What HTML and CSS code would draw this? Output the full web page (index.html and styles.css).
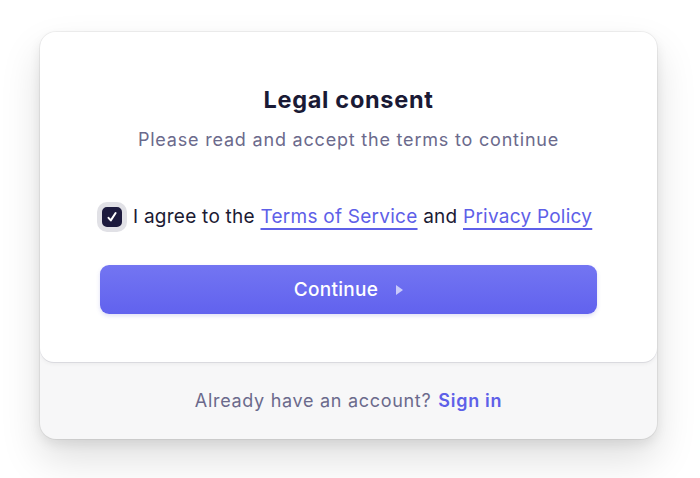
FILE: index.html
```html
<!DOCTYPE html>
<html>
<head>
<meta charset="utf-8">
<link rel="stylesheet" href="styles.css">
</head>
<body>
<div class="card">
  <div class="main">
    <h1 class="title">Legal consent</h1>
    <p class="subtitle">Please read and accept the terms to continue</p>
    <label class="agree">
      <span class="check">
        <svg viewBox="0 0 16 16" width="16" height="16"><path d="M4.5 8.8l2.3 2.6L11.6 4" fill="none" stroke="#fff" stroke-width="2" stroke-linecap="round" stroke-linejoin="round"/></svg>
      </span>
      <span class="agree-text">I agree to the <a class="link" href="#">Terms of Service</a> and <a class="link" href="#">Privacy Policy</a></span>
    </label>
    <button class="btn">Continue <span class="arrow"></span></button>
  </div>
  <div class="footer">Already have an account? <a class="signin" href="#">Sign in</a></div>
</div>
</body>
</html>
```
FILE: styles.css
```css
* { box-sizing: border-box; }
html, body { margin: 0; background: #ffffff; }
body {
  font-family: Inter, "Noto Sans", sans-serif;
  padding: 32px 43px 0 40px;
  min-height: 478px;
}
.card {
  width: 617px;
  background: #f7f7f8;
  border-radius: 16px;
  box-shadow: 0 0 0 1px rgba(0,0,0,0.05), 0 20px 40px rgba(0,0,0,0.13), 0 5px 12px rgba(0,0,0,0.08);
  overflow: hidden;
}
.main {
  background: #fff;
  border-radius: 0 0 14px 14px;
  box-shadow: 0 1px 0 #dadadf, 0 2px 4px rgba(0,0,0,0.05);
  padding: 54px 60px 48px;
  display: flex;
  flex-direction: column;
  align-items: center;
}
.title {
  margin: 0;
  font-size: 23.5px;
  line-height: 28px;
  font-weight: 700;
  color: #1a1a35;
  letter-spacing: 0.7px;
}
.subtitle {
  margin: 14px 0 0;
  font-size: 18px;
  line-height: 24px;
  color: #6b6a8c;
  letter-spacing: 0.8px;
}
.agree {
  margin-top: 52px;
  align-self: flex-start;
  display: flex;
  align-items: center;
  gap: 9px;
  font-size: 19px;
  line-height: 26px;
  color: #1b1a33;
  letter-spacing: 0.25px;
}
.check {
  width: 24px;
  height: 24px;
  border-radius: 7px;
  background: #1d1b3e;
  box-shadow: 0 0 0 3px #e1e1e6;
  border: 2px solid #e1e1e6;
  display: flex;
  align-items: center;
  justify-content: center;
}
.link {
  color: #5e60e8;
  text-decoration: underline;
  text-decoration-thickness: 1.5px;
  text-underline-offset: 5px;
}
.btn {
  margin-top: 35px;
  width: 100%;
  height: 49px;
  border: none;
  border-radius: 9px;
  background: linear-gradient(#7375f2, #6162ee);
  box-shadow: 0 2px 4px rgba(80,80,200,0.18);
  color: #fff;
  font-family: inherit;
  font-size: 19px;
  font-weight: 500;
  letter-spacing: 0.3px;
  display: flex;
  align-items: center;
  justify-content: center;
  gap: 12px;
}
.arrow {
  width: 0;
  height: 0;
  border-left: 7px solid #c9cafa;
  border-top: 5px solid transparent;
  border-bottom: 5px solid transparent;
  margin-left: 6px;
}
.footer {
  height: 77px;
  display: flex;
  align-items: center;
  justify-content: center;
  font-size: 18px;
  color: #6b6a8c;
  gap: 7px;
  letter-spacing: 0.7px;
}
.signin {
  color: #5e60e8;
  font-weight: 600;
  text-decoration: none;
}
```
